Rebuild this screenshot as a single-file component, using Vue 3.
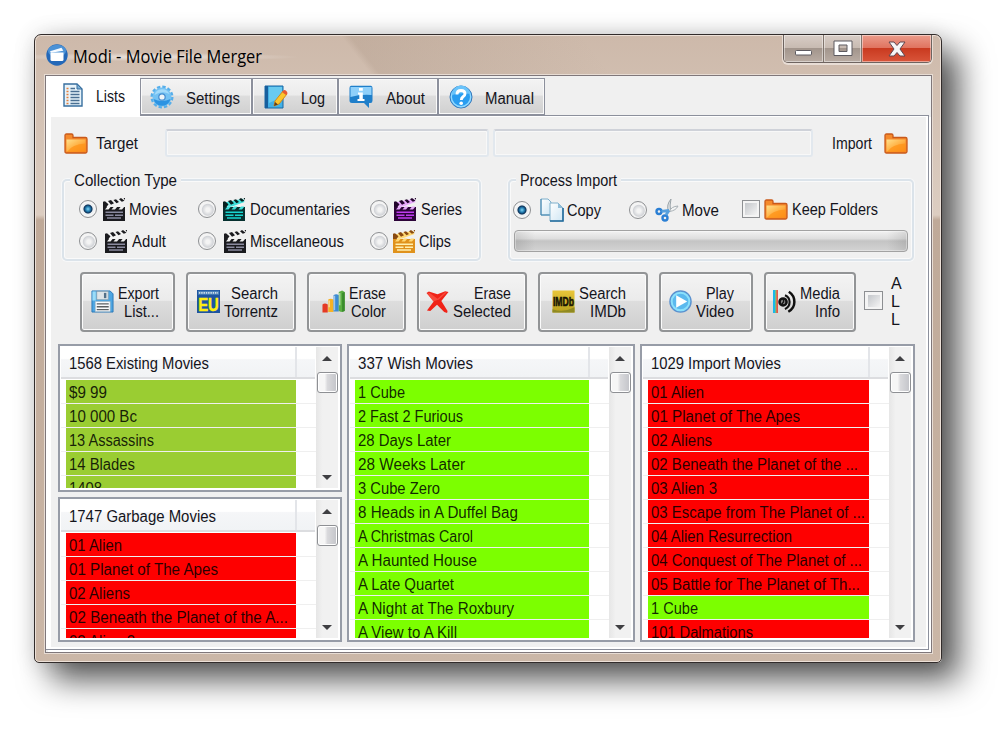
<script setup>
// Condenses a label horizontally so that it takes the given width in pixels.
const vFit = {
  mounted(el, { value }) {
    el.style.display = 'inline-block'
    const natural = el.getBoundingClientRect().width
    el.style.width = value + 'px'
    el.style.transformOrigin = '0 50%'
    el.style.transform = 'scaleX(' + value / natural + ')'
  },
}

const tabs = [
  { id: 'settings', label: 'Settings', fit: 54, w: 112 },
  { id: 'log', label: 'Log', fit: 24, w: 86 },
  { id: 'about', label: 'About', fit: 39, w: 100 },
  { id: 'manual', label: 'Manual', fit: 49, w: 107 },
]

const types = [
  [
    { id: 'movies', label: 'Movies', fit: 48, on: true },
    { id: 'documentaries', label: 'Documentaries', fit: 100 },
    { id: 'series', label: 'Series', fit: 41 },
  ],
  [
    { id: 'adult', label: 'Adult', fit: 34 },
    { id: 'miscellaneous', label: 'Miscellaneous', fit: 94 },
    { id: 'clips', label: 'Clips', fit: 32 },
  ],
]

const actions = [
  { id: 'export', lines: [['Export', 41], ['List...', 35]] },
  { id: 'torrentz', lines: [['Search', 47], ['Torrentz', 54]] },
  { id: 'color', lines: [['Erase', 37], ['Color', 35]] },
  { id: 'erase', lines: [['Erase', 37], ['Selected', 58]] },
  { id: 'imdb', lines: [['Search', 47], ['IMDb', 36]] },
  { id: 'play', lines: [['Play', 28], ['Video', 38]] },
  { id: 'media', lines: [['Media', 40], ['Info', 25]] },
]

const lists = [
  {
    id: 'existing', title: '1568 Existing Movies', fit: 140, tone: 'olive',
    rows: [['$9 99', 38], ['10 000 Bc', 68], ['13 Assassins', 85], ['14 Blades', 66], ['1408', 33]],
  },
  {
    id: 'garbage', title: '1747 Garbage Movies', fit: 147, tone: 'red',
    rows: [['01 Alien', 53], ['01 Planet of The Apes', 149], ['02 Aliens', 61], ['02 Beneath the Planet of the A...', 219], ['03 Alien 3', 66]],
  },
  {
    id: 'wish', title: '337 Wish Movies', fit: 115, tone: 'lime',
    rows: [['1 Cube', 47], ['2 Fast 2 Furious', 105], ['28 Days Later', 93], ['28 Weeks Later', 107], ['3 Cube Zero', 82], ['8 Heads in A Duffel Bag', 160], ['A Christmas Carol', 115], ['A Haunted House', 119], ['A Late Quartet', 96], ['A Night at The Roxbury', 156], ['A View to A Kill', 99]],
  },
  {
    id: 'import', title: '1029 Import Movies', fit: 130, tone: 'red',
    rows: [['01 Alien', 53], ['01 Planet of The Apes', 149], ['02 Aliens', 61], ['02 Beneath the Planet of the ...', 207], ['03 Alien 3', 66], ['03 Escape from The Planet of ...', 214], ['04 Alien Resurrection', 141], ['04 Conquest of The Planet of ...', 211], ['05 Battle for The Planet of Th...', 209], ['1 Cube', 47, 'lime'], ['101 Dalmations', 102]],
  },
]
</script>

<template>
  <div class="desktop">
    <svg class="defs" width="0" height="0">
      <defs>
        <linearGradient id="gFold" x1="0" y1="0" x2="1" y2="1"><stop offset="0" stop-color="#ffe08c" /><stop offset=".5" stop-color="#ffb347" /><stop offset="1" stop-color="#f57d14" /></linearGradient>
        <linearGradient id="gPaper" x1="0" y1="0" x2="1" y2="1"><stop offset="0" stop-color="#ffffff" /><stop offset="1" stop-color="#cfe6f3" /></linearGradient>
        <linearGradient id="gGold" x1="0" y1="0" x2="0" y2="1"><stop offset="0" stop-color="#e9c63a" /><stop offset="1" stop-color="#b8a01c" /></linearGradient>
      </defs>
      <symbol id="i-folder" viewBox="0 0 24 21">
        <path d="M1 2.500Q1 1 2.500 1H7.500Q9 1 9 2.500V4.500H21.500Q23 4.500 23 6V18.500Q23 20 21.500 20H2.500Q1 20 1 18.500Z" fill="#f58a2c" stroke="#c9591a" stroke-width="1.300" />
        <path d="M2.500 6.500H21.500V18.500H2.500Z" fill="url(#gFold)" />
        <path d="M3 19Q8 11 21.500 10.500V18.500Z" fill="#ff9418" opacity=".75" />
      </symbol>
      <symbol id="i-clap" viewBox="0 0 22 23">
        <path d="M0 9H22V23H0Z" fill="var(--board)" />
        <path d="M.500 8.500L1 4.500L20 .800L21.500 4L9 8.500Z" fill="var(--bars)" />
        <path d="M0 3.800L2 3.200L5.500 6.300L3.500 9H0ZM5 3L8 2L11 5.300L8 6.800ZM10.500 2L13 1.200L16 4L13.500 5.300ZM16 1.200L18 0L21.500 2.800L18.800 3.700ZM20.500 0H22V2Z" fill="var(--stripe)" />
        <path d="M2 11.500L4.500 8.500H8L5.500 11.500ZM8.500 11.500L11 8.500H14.500L12 11.500ZM15.500 11.500L18 8.500H21.500L19 11.500Z" fill="var(--bars)" />
        <path d="M2.500 14.200H20M4 20H18M2.500 17.300H10.500M12 17.300H20" stroke="var(--lines)" stroke-width="1.500" fill="none" />
      </symbol>
      <symbol id="i-lists" viewBox="0 0 20 24">
        <path d="M1 1H14L19 6V23H1Z" fill="#e7f3fa" stroke="#386f9f" stroke-width="1.400" />
        <path d="M14 1V6H19Z" fill="#7db2d8" stroke="#386f9f" />
        <path d="M3.500 5.500H5.500M3.500 8.500H5.500M3.500 11.500H5.500M3.500 14.500H5.500M3.500 17.500H5.500M3.500 20.500H5.500" stroke="#e4803e" stroke-width="1.700" />
        <path d="M7.500 5.500H12M7.500 8.500H16.500M7.500 11.500H16.500M7.500 14.500H16.500M7.500 17.500H16.500M7.500 20.500H16.500" stroke="#4a6f92" stroke-width="1.300" />
      </symbol>
      <symbol id="i-settings" viewBox="0 0 24 24">
        <circle cx="12" cy="12" r="9.800" fill="none" stroke="#56aeea" stroke-width="3.400" stroke-dasharray="3.200 1.930" />
        <circle cx="12" cy="12" r="6.300" fill="none" stroke="#74c2f3" stroke-width="6.400" />
        <path d="M3.500 14A8.700 8.700 0 0 0 20.500 14Q12 18 3.500 14Z" fill="#2c93e2" />
        <path d="M4.500 10A8 8 0 0 1 19.500 9Q12 5 4.500 10Z" fill="#a3dafa" />
        <circle cx="12" cy="12" r="3.200" fill="#eef4f8" stroke="#418bd0" stroke-width="1.200" />
      </symbol>
      <symbol id="i-log" viewBox="0 0 24 24">
        <path d="M1 1H19V23H1Z" fill="#42b1e6" stroke="#1767a4" />
        <path d="M1 1H4V23H1Z" fill="#175f9d" />
        <path d="M5 2H18V12L5 18Z" fill="#69caef" />
        <path d="M10 21L11 16L19 6L23 9L15 19Z" fill="#fbc52b" stroke="#d58915" />
        <path d="M18 7L20 5Q23 5 23.500 8.500L22 10Z" fill="#e75a30" />
        <path d="M10 21L11 17L14 19.500Z" fill="#5c4022" />
      </symbol>
      <symbol id="i-about" viewBox="0 0 24 24">
        <path d="M2 .800H22Q23.500 1 23.500 3V15.500Q23.500 18 21.500 18H20V23L15 18H3Q.500 18 .500 15.500V3Q.500 1 2 .800Z" fill="#1f7fca" />
        <path d="M1.500 2H22.500V10Q12 9 1.500 12Z" fill="#8fd0fa" />
        <path d="M10 3H13.800V5.800H10ZM9 7.500H13.800V14H15.500V16H8.500V14H10.300V9.500H9Z" fill="#fff" />
      </symbol>
      <symbol id="i-manual" viewBox="0 0 24 24">
        <circle cx="12" cy="12" r="11" fill="#2a9df0" stroke="#3a78b8" />
        <circle cx="12" cy="12" r="9.700" fill="none" stroke="#93daff" stroke-width="1.400" />
        <path d="M3 10A9 9 0 0 1 21 9Q12 7 3 10Z" fill="#69c3fa" />
        <path d="M8 9.500Q8 5.500 12 5.500Q16 5.500 16 8.800Q16 10.500 14 11.800Q12.300 13 12.300 15" fill="none" stroke="#fff" stroke-width="2.900" />
        <circle cx="12.200" cy="18.300" r="1.800" fill="#fff" />
      </symbol>
      <symbol id="i-copy" viewBox="0 0 24 24">
        <path d="M1 1H8L11 4V17H1Z" fill="url(#gPaper)" stroke="#7fb0cc" />
        <path d="M1 1V17H11" fill="none" stroke="#3e82ad" />
        <path d="M10 5H18L23 10V23H10Z" fill="url(#gPaper)" stroke="#7fb0cc" />
        <path d="M23 10V23H10" fill="none" stroke="#236b9c" stroke-width="1.600" />
        <path d="M18 5V10H23Z" fill="#8fbcd8" />
      </symbol>
      <symbol id="i-move" viewBox="0 0 24 24">
        <path d="M13.500 13Q11 7 16 1Q14.500 7 15.500 13Z" fill="#dfe3e6" stroke="#9aa3a8" />
        <path d="M14.500 13.500Q16 8.500 23 8Q21 12.500 14.500 13.500Z" fill="#f4f5f5" stroke="#a8b0b5" />
        <circle cx="4" cy="13.500" r="2.500" fill="none" stroke="#2b7fd4" stroke-width="2.400" />
        <circle cx="10" cy="20" r="2.500" fill="none" stroke="#2b7fd4" stroke-width="2.400" />
        <path d="M6.500 13.300L14 12.500M11 17L14 12.500" stroke="#57a0dd" stroke-width="2.800" />
      </symbol>
      <symbol id="i-export" viewBox="0 0 24 24">
        <path d="M1 1H20L23 4V23H1Z" fill="#4ea6e2" stroke="#2b78b7" />
        <path d="M1.500 1.500H5V11H1.500Z" fill="#9bdcf8" />
        <path d="M6 1.500H18V10H6Z" fill="#dfe4e8" stroke="#8c9aa5" stroke-width=".600" />
        <path d="M13.500 3H16V8.500H13.500Z" fill="#537089" />
        <path d="M4.500 12H20V22.500H4.500Z" fill="#fafbfc" stroke="#a5b7c4" stroke-width=".600" />
        <path d="M6 14.500H18.500M6 17.500H18.500M6 20.500H18.500" stroke="#5c6063" stroke-width="1.400" />
      </symbol>
      <symbol id="i-color" viewBox="0 0 24 24">
        <path d="M.500 15Q3 13 6 15V23.500H.500Z" fill="#e53a24" />
        <path d="M6.500 10Q9 8.500 12 10V23H6.500Z" fill="#f7b224" />
        <path d="M12 5.500Q15 3.500 17.500 5.500V22.500H12Z" fill="#3c8bd3" />
        <path d="M17.500 2L21 .500L23.700 2V22L20 23L17.500 22Z" fill="#5aae42" />
        <path d="M21 3L23.700 2V22L21 23Z" fill="#3a8b2d" />
        <path d="M13 6V21M7.500 11V18M18.500 3V16" stroke="#fff" stroke-width="1.500" opacity=".5" />
      </symbol>
      <symbol id="i-erase" viewBox="0 0 24 24">
        <path d="M.500 3L3 1.500L12 4.500L20 1.200L23.500 2L16 11.500L22.500 22L22 24L19 23L11.500 15.500L4.500 22L1 21.500L8 12Z" fill="#f02318" />
        <path d="M1.500 3.500L4 3L12 9L20 2L21.500 2.500L13.500 10L7.500 12Z" fill="#fb5a4a" opacity=".7" />
      </symbol>
      <symbol id="i-play" viewBox="0 0 24 24">
        <circle cx="12" cy="12" r="11" fill="#5bb9ee" stroke="#5c92cf" stroke-width="1.500" />
        <circle cx="12" cy="12" r="9.200" fill="none" stroke="#8be0fb" stroke-width="2" />
        <path d="M7.500 5.500L19 12L7.500 18.500Z" fill="#fff" />
      </symbol>
      <symbol id="i-media" viewBox="0 0 24 24">
        <path d="M1.200 0V24" stroke="#18b8ec" stroke-width="2.400" />
        <path d="M3 0V24" stroke="#58b85a" stroke-width="1.200" />
        <path d="M4.300 0V24" stroke="#e8402c" stroke-width="1.500" />
        <circle cx="10.500" cy="12.500" r="3.700" fill="#888" stroke="#111" stroke-width="2.600" />
        <path d="M11 9.500V12.500L9 15" fill="none" stroke="#111" stroke-width="1.400" />
        <path d="M12.500 5.500Q17.300 7.500 17.300 12.500Q17.300 17.500 12.500 20" fill="none" stroke="#111" stroke-width="2.200" />
        <path d="M16.500 1.800Q22.300 5.500 22.300 12.500Q22.300 19 16 22.700" fill="none" stroke="#111" stroke-width="2.600" />
      </symbol>
      <symbol id="i-app" viewBox="0 0 22 22">
        <circle cx="11" cy="11" r="10.700" fill="#2468b8" />
        <ellipse cx="11" cy="7" rx="9" ry="6.300" fill="#4c92d6" />
        <path d="M4.500 8.500H17.500V15.500Q17.500 17 16 17H6Q4.500 17 4.500 15.500Z" fill="#fff" />
        <path d="M4 7.300L15.500 3.800L17.300 6.800L5 8.700Z" fill="#f7fbff" />
      </symbol>
    </svg>

    <div class="window">
      <header class="titlebar">
        <svg class="app-icon"><use href="#i-app" /></svg>
        <span class="title"><span v-fit="189">Modi - Movie File Merger</span></span>
        <div class="caption">
          <span class="cap min"><svg width="20" height="8"><rect x="1.500" y="1.500" width="16" height="4.500" rx="1" fill="#fff" stroke="#5c5a60" /></svg></span>
          <span class="cap max"><svg width="20" height="17"><path d="M1 1H19V15.500H1ZM6 5V11.500H14V5Z" fill="#fff" fill-rule="evenodd" stroke="#5c5a60" /></svg></span>
          <span class="cap close"><svg width="18" height="16"><path d="M1 1H6L9 4.500L12 1H17L12 8L17 15H12L9 11.500L6 15H1L6 8Z" fill="#f6f6f6" stroke="#5f4650" /></svg></span>
        </div>
      </header>

      <main class="client">
        <nav class="tabs">
          <div class="tab active">
            <svg><use href="#i-lists" /></svg><span v-fit="29">Lists</span>
          </div>
          <div v-for="t in tabs" :key="t.id" class="tab" :class="t.id" :style="{ width: t.w + 'px' }">
            <svg><use :href="'#i-' + t.id" /></svg><span v-fit="t.fit">{{ t.label }}</span>
          </div>
        </nav>

        <section class="page">
          <div class="paths">
            <svg class="folder"><use href="#i-folder" /></svg>
            <span class="lbl-target"><span v-fit="42">Target</span></span>
            <div class="field f1"></div>
            <div class="field f2"></div>
            <span class="lbl-import"><span v-fit="40">Import</span></span>
            <svg class="folder"><use href="#i-folder" /></svg>
          </div>

          <div class="groups">
            <div class="group collection">
              <span class="legend"><span v-fit="103">Collection Type</span></span>
              <div v-for="(row, i) in types" :key="i" class="type-row">
                <div v-for="t in row" :key="t.id" class="opt" :class="t.id">
                  <i class="radio" :class="{ on: t.on }"></i>
                  <svg class="clap"><use href="#i-clap" /></svg>
                  <span v-fit="t.fit">{{ t.label }}</span>
                </div>
              </div>
            </div>

            <div class="group process">
              <span class="legend"><span v-fit="97">Process Import</span></span>
              <div class="proc-row">
                <div class="opt copy"><i class="radio on"></i><svg class="ic"><use href="#i-copy" /></svg><span v-fit="34">Copy</span></div>
                <div class="opt move"><i class="radio"></i><svg class="ic"><use href="#i-move" /></svg><span v-fit="37">Move</span></div>
                <div class="opt keep"><i class="check"></i><svg class="folder"><use href="#i-folder" /></svg><span v-fit="86">Keep Folders</span></div>
              </div>
              <div class="progress"></div>
            </div>
          </div>

          <div class="actions">
            <button v-for="a in actions" :key="a.id" class="btn" :class="a.id">
              <svg v-if="a.id === 'torrentz'" viewBox="0 0 24 24">
                <path d="M0 0H24V24H0Z" fill="#1e55a0" />
                <path d="M1 .800H23V5H1Z" fill="#4a80b8" />
                <path d="M2 3H22" stroke="#cfe0ec" stroke-width="1.800" stroke-dasharray="1.500 .900" />
                <text x="1.200" y="22" font-size="20" font-family="Liberation Sans, sans-serif" font-weight="700" fill="#ffee12" stroke="#ffee12" stroke-width=".500" textLength="21.500" lengthAdjust="spacingAndGlyphs">EU</text>
              </svg>
              <svg v-else-if="a.id === 'imdb'" viewBox="0 0 24 24">
                <path d="M.500 .500H23.500V23.500H.500Z" fill="url(#gGold)" />
                <path d="M.500 20Q12 24 23.500 18V23.500H.500Z" fill="#8f8a22" />
                <text x="1" y="17" font-size="13.500" font-family="Liberation Sans, sans-serif" font-weight="700" fill="#161404" stroke="#161404" stroke-width=".600" textLength="22" lengthAdjust="spacingAndGlyphs">IMDb</text>
              </svg>
              <svg v-else><use :href="'#i-' + a.id" /></svg>
              <span class="lines"><span v-for="l in a.lines" :key="l[0]" v-fit="l[1]">{{ l[0] }}</span></span>
            </button>
            <i class="check all-check"></i>
            <span class="all"><span>A</span><span>L</span><span>L</span></span>
          </div>

          <div class="lists">
            <div v-for="l in lists" :key="l.id" class="list" :class="l.id">
              <div class="body">
                <div class="head"><span class="head-cell"><span v-fit="l.fit">{{ l.title }}</span></span></div>
                <div class="rows">
                  <div v-for="r in l.rows" :key="r[0]" class="row">
                    <div class="cell" :class="r[2] || l.tone"><span v-fit="r[1]">{{ r[0] }}</span></div>
                  </div>
                </div>
              </div>
              <div class="scroll">
                <i class="arrow up"></i>
                <i class="thumb"></i>
                <i class="arrow down"></i>
              </div>
            </div>
          </div>
        </section>
      </main>
    </div>
  </div>
</template>

<style>
html, body { margin: 0; background: #fff; overflow: hidden; }
</style>

<style scoped>
* { box-sizing: border-box; }
.desktop {
  width: 1008px; height: 729px; padding: 34px 0 0 34px; overflow: hidden; background: #fff;
  font-family: "Liberation Sans", Arial, sans-serif; font-size: 16px; line-height: 18px; color: #14141c;
}
.defs { position: absolute; }
svg { flex: none; display: block; }
span { white-space: pre; }
.window {
  width: 908px; height: 629px; border: 1px solid #322c2b; border-radius: 7px 7px 5px 5px;
  background:
    linear-gradient(52deg, transparent 0 36%, rgba(120, 95, 75, .13) 37%, transparent 62%) 0 0 / 100% 42px no-repeat,
    linear-gradient(180deg, #cdb9aa 0, #dccdc1 180px, #bfa998 185px, #cbb7a7 100%);
  box-shadow: inset 0 0 0 1px #ece0d7, 17px 17px 32px rgba(0, 0, 0, .66), 0 0 22px rgba(0, 0, 0, .12);
}
.titlebar { display: flex; height: 40px; padding-left: 11px; border-radius: 6px 6px 0 0; background: radial-gradient(ellipse at 115px 22px, rgba(255, 255, 255, .6), transparent 150px); }
.app-icon { width: 22px; height: 22px; margin-top: 9px; }
.title { flex: 1; padding: 9px 0 0 5px; font: 17.500px/24px "Open Sans", "Noto Sans", sans-serif; color: #000; }
.caption { display: flex; width: 149px; height: 28px; margin-right: 9px; border: 1px solid #6e6460; border-top: 0; border-radius: 0 0 5px 5px; overflow: hidden; box-shadow: 0 1px 0 1px #e8ddd5; }
.cap { display: flex; align-items: center; justify-content: center; box-shadow: inset 0 0 0 1px rgba(255, 255, 255, .45); background: linear-gradient(180deg, #d8cdc6 0, #c7bab1 48%, #a2958c 50%, #b9aca3 100%); }
.min { width: 40px; padding-top: 9px; border-right: 1px solid #81756d; }
.max { width: 38px; border-right: 1px solid #81756d; }
.close { flex: 1; background: linear-gradient(180deg, #eb9c8b 0, #e0735f 48%, #c93a20 50%, #d9553a 100%); }

.client { width: 887px; height: 578px; margin-left: 10px; border: 1px solid #7f777a; background: #f0f0f0; box-shadow: 0 0 0 1px #e7dcd3; }
.tabs { display: flex; align-items: flex-end; height: 39px; position: relative; }
.tab { display: flex; align-items: center; height: 37px; border: 1px solid #8c909c; background: linear-gradient(180deg, #f3f3f3 0, #ececec 45%, #dddddd 50%, #d0d0d0 100%); box-shadow: inset 0 0 0 1px #fafafa; }
.tab svg { width: 24px; height: 24px; margin-left: 9px; }
.tab span { margin-left: 12px; padding-top: 4px; }
.tab.log svg { margin-left: 11px; }
.tab.about svg { margin-left: 10px; }
.tab.about span, .tab.log span { margin-left: 13px; }
.tab.manual svg { margin-left: 10px; }
.tab.active { width: 94px; height: 41px; margin-bottom: -2px; border: 0; background: #fff; box-shadow: none; z-index: 1; }
.tab.active svg { width: 20px; height: 24px; margin: -3px 0 0 17px; }
.tab.active span { margin-left: 13px; padding-top: 0; }

.page { width: 883px; height: 535px; border: 1px solid #8c909c; border-left: 0; box-shadow: inset 5px 0 #fff, inset -2px -2px #fff, inset 0 1px #fff, 2px 2px #fff; }

.paths { display: flex; align-items: center; height: 28px; margin: 13px 0 0 18px; }
.folder { width: 24px; height: 21px; }
.paths .folder { margin-top: 1px; }
.lbl-target { width: 77px; padding: 2px 0 0 8px; }
.lbl-import { width: 71px; padding: 2px 0 0 19px; }
.field { height: 28px; border: 2px solid #e2e8ee; border-top-color: #cfd2d9; border-radius: 3px; background: #f0f0f0; box-shadow: inset 0 0 0 1px #f8f8f8; }
.f1 { width: 324px; margin-right: 4px; }
.f2 { width: 320px; }

.groups { display: flex; gap: 27px; margin: 22px 0 0 16px; }
.group { position: relative; height: 82px; border: 2px solid #dbe3ea; border-radius: 5px; box-shadow: inset 0 0 0 1px #fafafa, 0 0 0 1px #f7f8f9; }
.collection { width: 419px; padding-top: 12px; }
.process { width: 406px; padding-top: 17px; }
.legend { position: absolute; left: 6px; top: -11px; height: 20px; padding: 2px 4px 0; background: #f0f0f0; }
.process .legend { left: 6px; }
.opt { display: flex; align-items: center; }
.radio { flex: none; width: 18px; height: 18px; border: 1.500px solid #8d8f92; border-radius: 50%; background: radial-gradient(circle at 55% 55%, #f4f4f4 0 15%, #d2d4d8 44%, #f4f4f4 52%); }
.radio.on { background: radial-gradient(circle at 50% 50%, #7fd4f4 0, #1f78ac 22%, #0d2f55 36%, #e8edf0 44%, #f6f6f6 60%); }
.check { flex: none; width: 18px; height: 18px; border: 1.500px solid #8d8f92; background: linear-gradient(135deg, #c3c6ca, #f4f4f4) 50% / 12px 12px no-repeat #f4f4f4; }
.type-row { display: flex; height: 32px; align-items: center; padding-left: 15px; }
.opt span { padding-top: 1px; }
.clap { width: 22px; height: 23px; margin: 0 4px 0 6px; --board: #1b1b1f; --stripe: #1b1b1f; --bars: #f2f2f2; --lines: #8b8ba0; }
.movies, .adult { width: 119px; }
.documentaries, .miscellaneous { width: 172px; }
.adult .clap { margin-left: 8px; margin-right: 5px; }
.miscellaneous .clap { margin-left: 8px; }
.documentaries .clap { margin-left: 7px; margin-right: 5px; --board: #06302f; --stripe: #06201f; --bars: #3fe0dc; --lines: #18d6d0; }
.series .clap { margin-right: 5px; --board: #2c0438; --stripe: #22042c; --bars: #e6a8fa; --lines: #c03cf0; }
.clips .clap { margin-left: 5px; --board: #e0921c; --stripe: #8a4a10; --bars: #ffd874; --lines: #fff0b0; }

.proc-row { display: flex; height: 24px; align-items: center; padding-left: 3px; }
.ic { width: 24px; height: 24px; }
.copy { width: 116px; }
.copy .ic { margin: 0 3px 0 9px; }
.move { width: 113px; }
.move .ic { margin: 0 3px 0 8px; }
.keep .folder { margin: 0 4px; }
.keep { margin-top: -2px; }
.progress { width: 394px; height: 22px; margin: 8px 0 0 4px; border: 1.500px solid #a2a2a2; border-radius: 4px; background: linear-gradient(90deg, rgba(0, 0, 0, .1), transparent 20px calc(100% - 20px), rgba(0, 0, 0, .1)), linear-gradient(180deg, #f2f2f2 0, #dedede 38%, #c4c4c4 50%, #d3d3d3 100%); box-shadow: inset 0 0 0 1px rgba(255, 255, 255, .35); }

.actions { display: flex; gap: 11px; height: 60px; margin: 11px 0 0 34px; }
.btn { display: flex; align-items: center; justify-content: flex-end; flex: none; height: 60px; padding: 0 17px 0 0; gap: 4px; font: inherit; color: inherit; border: 2px solid #929496; border-radius: 4px; background: linear-gradient(180deg, #f3f3f3 0, #ebebeb 47%, #dddddd 49%, #cfcfcf 100%); box-shadow: inset 0 0 0 1px #fbfbfb; }
.btn svg { width: 23px; height: 23px; margin-top: -2px; }
.lines { display: flex; flex-direction: column; align-items: flex-end; padding-top: 1px; }
.export { width: 95px; padding-right: 14px; }
.torrentz { width: 110px; padding-right: 16px; }
.color { width: 99px; padding-right: 18px; }
.erase { width: 110px; padding-right: 14px; }
.imdb { width: 110px; padding-right: 20px; }
.play { width: 94px; }
.media { width: 92px; padding-right: 14px; }
.all-check { margin: 19px 0 0 -3px; width: 19px; height: 19px; }
.all { display: flex; flex-direction: column; margin: 3px 0 0 -3px; }

.lists { display: grid; grid-template-columns: 284px 288px 275px; grid-template-rows: 148px 145px; gap: 5px; margin: 12px 0 0 12px; grid-template-areas: "existing wish import" "garbage wish import"; }
.list { display: flex; min-height: 0; border: 2px solid #979ca7; background: #fff; padding: 1px 2px 2px 1px; overflow: hidden; }
.existing { grid-area: existing; }
.garbage { grid-area: garbage; }
.wish { grid-area: wish; }
.import { grid-area: import; }
.body { flex: 1; min-width: 0; display: flex; flex-direction: column; }
.head { flex: none; display: flex; height: 32px; margin-right: 1px; background: linear-gradient(180deg, #fff 0 38%, #f5f6f8 42%, #f1f3f5 100%); border-bottom: 2px solid #dcdde0; }
.head-cell { flex: 1; margin-right: 18px; padding: 8px 0 0 8px; border-right: 2px solid #e3e5e9; }
.rows { flex: 1; min-height: 0; overflow: hidden; padding-top: 1px; }
.row { height: 24px; padding: 0 20px 0 5px; border-bottom: 1px solid #efefef; }
.cell { height: 23px; padding: 4px 0 0 3px; color: rgba(0, 0, 0, .86); overflow: hidden; }
.olive { background: #9acd32; }
.lime { background: #7cff00; }
.red { background: #fe0000; }
.scroll { flex: none; width: 22px; background: linear-gradient(90deg, #e6e6e6, #f1f1f1 30%, #f1f1f1); display: flex; flex-direction: column; align-items: center; }
.arrow { width: 0; height: 0; border: 5px solid transparent; }
.up { border-top: 0; border-bottom: 5px solid #3f3f42; margin-top: 9px; }
.down { border-bottom: 0; border-top: 5px solid #3f3f42; margin: auto 0 8px; }
.thumb { flex: none; width: 21px; height: 21px; margin-top: 11px; border: 1.500px solid #8e9094; border-radius: 3px; background: linear-gradient(90deg, #f6f6f6 0 35%, #d9d9dc 50%, #c3c4c9 100%); box-shadow: inset 0 0 0 1px #fff; }
</style>
